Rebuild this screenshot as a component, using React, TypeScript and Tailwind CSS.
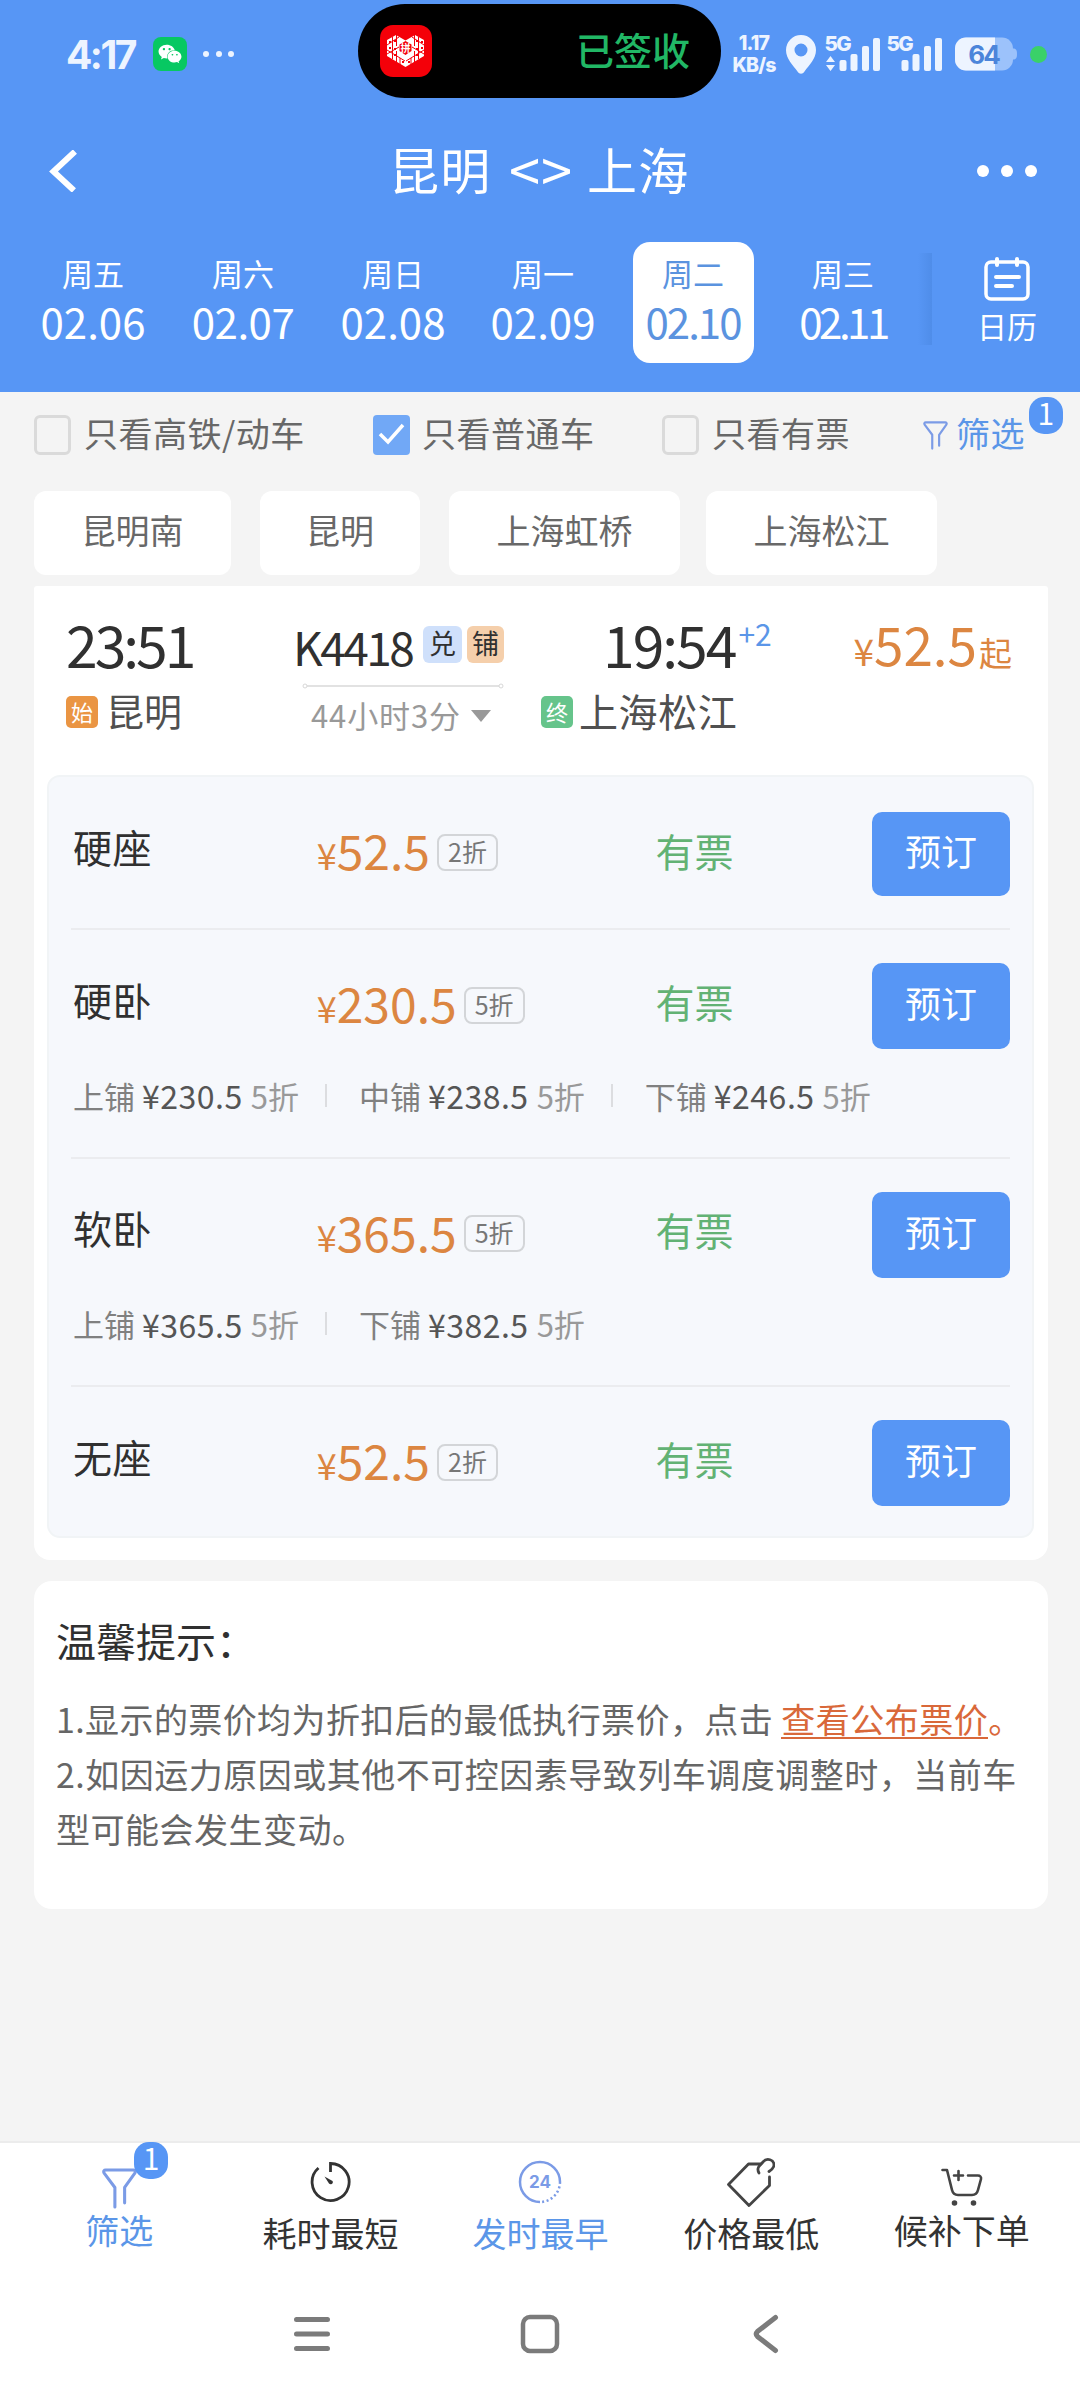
import { FaWeixin } from "react-icons/fa";
import clsx from "clsx";

const days = [
  { week: "周五", date: "02.06", spacing: "tracking-normal" },
  { week: "周六", date: "02.07", spacing: "tracking-[-0.5px]" },
  { week: "周日", date: "02.08", spacing: "tracking-normal" },
  { week: "周一", date: "02.09", spacing: "tracking-normal" },
  { week: "周二", date: "02.10", spacing: "tracking-[-2px]", active: true },
  { week: "周三", date: "02.11", spacing: "tracking-[-3.500px]" },
];

const stations = [
  { name: "昆明南", size: "w-[197px] mr-[29px]" },
  { name: "昆明", size: "w-[160px] mr-[29px]" },
  { name: "上海虹桥", size: "w-[231px] mr-[26px]" },
  { name: "上海松江", size: "w-[231px]" },
];

const seats = [
  { name: "硬座", price: "52.5", discount: "2折", berths: [] },
  {
    name: "硬卧",
    price: "230.5",
    discount: "5折",
    berths: [
      { name: "上铺", price: "¥230.5", discount: "5折" },
      { name: "中铺", price: "¥238.5", discount: "5折" },
      { name: "下铺", price: "¥246.5", discount: "5折" },
    ],
  },
  {
    name: "软卧",
    price: "365.5",
    discount: "5折",
    berths: [
      { name: "上铺", price: "¥365.5", discount: "5折" },
      { name: "下铺", price: "¥382.5", discount: "5折" },
    ],
  },
  { name: "无座", price: "52.5", discount: "2折", berths: [] },
];

function PddLogo() {
  return (
    <svg width="52" height="52" viewBox="0 0 52 52">
      <rect width="52" height="52" rx="13" fill="#f40009" />
      <path d="M16 10 7 15v16l18.500 11L44 31V15l-9-5-9.500 5.500z" fill="#fff" />
      <path
        d="M12.500 12v22M16.500 9v12M16.500 26v11M38.500 12v22M34.500 9v12M34.500 26v11M7 20l12-8M32 12l12 8M7 25l18 11M44 25 26 36M20 33v7M31 33v7M7 29l12-7M44 29l-12-7"
        stroke="#f40009"
        strokeWidth="1"
      />
      <path
        d="M9 17h2M9 23h2M14 16h2M14 24h2M36 16h2M36 24h2M41 17h2M41 23h2M14 30h2M36 30h2M22 37h2M28 37h2"
        stroke="#f40009"
        strokeWidth="2"
      />
      <path d="M25.500 16 31.500 19.500v6.500l-6 4-6-4v-6.500z" fill="#f40009" />
      <text x="25.500" y="26.500" fontSize="10" fontWeight="700" textAnchor="middle" fill="#fff">
        拼
      </text>
    </svg>
  );
}

function Signal({ arrows }: { arrows?: boolean }) {
  return (
    <svg className="overflow-visible" width="57" height="40" viewBox="0 0 57 40" fill="#edf4ff">
      <text x="-.5" y="17" fontSize="20.500" fontWeight="800" fontFamily="Inter" letterSpacing="-1.5">
        5G
      </text>
      {arrows && <path d="M5.500 22l4.500 6H1zM5.500 37l4.500-6H1z" />}
      <rect x="14.500" y="26" width="7" height="11" rx="2" />
      <rect x="25.500" y="20" width="7" height="17" rx="2" />
      <rect x="37" y="12" width="7" height="25" rx="2" />
      <rect x="48" y="4" width="7" height="33" rx="2" />
    </svg>
  );
}

function StatusBar() {
  return (
    <div className="flex h-[108px] items-center pl-[66px] text-[#edf4ff]">
      <span className="w-[87px] text-[39px] leading-none font-bold tracking-[-2.500px] font-['Inter']">4:17</span>
      <div className="grid h-[34px] w-[34px] place-content-center rounded-[8px] bg-[#07c862]">
        <FaWeixin className="text-[24px] text-white" />
      </div>
      <div className="ml-4 flex w-[31px] justify-between">
        <i className="size-[6px] rounded-full bg-[#edf4ff]" />
        <i className="size-[6px] rounded-full bg-[#edf4ff]" />
        <i className="size-[6px] rounded-full bg-[#edf4ff]" />
      </div>
      <div className="mt-1 ml-[124px] flex h-[94px] w-[363px] items-center justify-between self-start rounded-full bg-black pr-[31px] pl-[22px]">
        <PddLogo />
        <span className="pb-1 text-[38px] leading-none text-[#21b765] font-medium">已签收</span>
      </div>
      <div className="ml-[8px] w-[50px] text-center text-[19.500px] leading-[22px] font-extrabold tracking-[-0.8px] font-['Inter']">
        <p>1.17</p>
        <p>KB/s</p>
      </div>
      <svg className="ml-[7px]" width="30" height="39" viewBox="0 0 30 39">
        <path
          fillRule="evenodd"
          fill="#edf4ff"
          d="M15 0a15 15 0 0 1 15 15c0 9-7 15-11.500 21.500-2 3-5 3-7 0C7 30 0 24 0 15A15 15 0 0 1 15 0zm0 8.500a6.500 6.500 0 1 0 0 13 6.500 6.500 0 0 0 0-13z"
        />
      </svg>
      <div className="ml-[9px] flex gap-[5px]">
        <Signal arrows />
        <Signal />
      </div>
      <svg className="ml-[11px]" width="62" height="34" viewBox="0 0 62 34">
        <rect width="58" height="33" y=".5" rx="11" fill="#9cc2fb" />
        <path d="M58 11.500c3 0 4 1.500 4 5.500s-1 5.500-4 5.500z" fill="#9cc2fb" />
        <path d="M11 .5h29v33H11a11 11 0 0 1-11-11v-11A11 11 0 0 1 11 .5z" fill="#edf4ff" />
        <text x="28.500" y="26.500" fontSize="26" fontWeight="700" fontFamily="Inter" textAnchor="middle" letterSpacing="-2" fill="#4c85da">
          64
        </text>
      </svg>
      <i className="ml-[13px] size-[17px] rounded-full bg-[#3ad169]" />
    </div>
  );
}

function Header() {
  return (
    <header className="h-[392px] bg-[#5796f5] text-white">
      <StatusBar />
      <div className="flex h-[134px] items-center pr-[43px] pb-2 pl-[49px]">
        <svg width="39" height="42" viewBox="0 0 39 42" fill="none" stroke="#fff" strokeWidth="6">
          <path d="M26 1.500 4.500 21.500 25 40.500" />
        </svg>
        <h1 className="ml-[301px] flex w-[590px] pb-[7px] text-[50px] leading-none tracking-[1.500px]">
          <span className="w-[120px]">昆明</span>
          <span className="w-[78px] text-[56px] leading-[50px] tracking-[1px]">&lt;&gt;</span>
          <span>上海</span>
        </h1>
        <div className="flex gap-3">
          <i className="size-[12px] rounded-full bg-white" />
          <i className="size-[12px] rounded-full bg-white" />
          <i className="size-[12px] rounded-full bg-white" />
        </div>
      </div>
      <div className="flex pl-[18px]">
        {days.map((d) => (
          <div key={d.date} className="w-[150px]">
            <div
              className={clsx(
                "mx-auto h-[121px] w-[121px] rounded-[17px] pt-[15px] text-center",
                d.active && "bg-white text-[#5b93df]"
              )}
            >
              <p className="text-[31px] leading-none">{d.week}</p>
              <p className={clsx("mt-[12px] text-[42px] leading-none", d.spacing)}>{d.date}</p>
            </div>
          </div>
        ))}
        <div className="mt-[11px] h-[92px] w-[14px] bg-linear-to-r from-transparent to-[#4f8de9]" />
        <div className="flex flex-1 flex-col items-center pt-[15px] pl-[2px]">
          <svg width="46" height="44" viewBox="0 0 46 44" fill="none" stroke="#fff" strokeLinecap="round">
            <rect x="2" y="5" width="42" height="37" rx="5" strokeWidth="3.500" />
            <path d="M13 2v6M33 2v6M12 20h23M12 29h16" strokeWidth="4" />
          </svg>
          <p className="mt-[9px] text-[30px] leading-none">日历</p>
        </div>
      </div>
    </header>
  );
}

function Check({ on }: { on?: boolean }) {
  if (on) {
    return (
      <svg width="37" height="40" viewBox="0 0 37 40" fill="none">
        <rect width="37" height="40" rx="4" fill="#71a8f6" />
        <path d="M7 19l8 8 15-17" stroke="#fff" strokeWidth="3.500" />
      </svg>
    );
  }
  return <span className="h-[40px] w-[37px] rounded-[6px] border-[3px] border-[#dadada]" />;
}

function Funnel({ className }: { className?: string }) {
  return (
    <svg className={className} viewBox="0 0 34 40" fill="none" stroke="#7b9be6" strokeWidth="3" strokeLinecap="round" strokeLinejoin="round">
      <path d="M12.500 38V19L2 5c-1-2 0-3 1.500-3h27C32 2 33 3 32 5L22 19v15" />
    </svg>
  );
}

function Filters() {
  return (
    <>
      <div className="flex h-[99px] items-center pb-[13px] pl-[34px] text-[34px] leading-none tracking-[0.5px] text-[#686868]">
        <Check />
        <span className="ml-[13px] w-[289px] pb-1">只看高铁/动车</span>
        <Check on />
        <span className="ml-[12px] w-[240px] pb-1">只看普通车</span>
        <Check />
        <span className="ml-[13px] w-[211px] pb-1">只看有票</span>
        <Funnel className="h-[29px] w-[25px]" />
        <span className="ml-[8px] pb-1 text-[#5b96e8]">筛选</span>
        <span className="mb-[40px] ml-[4px] h-[37px] w-[34px] rounded-[15px] bg-[#5796f5] text-center text-[30px] leading-[31px] text-white">1</span>
      </div>
      <div className="flex px-[34px] text-[34px] text-[#686868]">
        {stations.map((s) => (
          <div key={s.name} className={clsx("h-[84px] rounded-[12px] bg-white text-center leading-[77px]", s.size)}>
            {s.name}
          </div>
        ))}
      </div>
    </>
  );
}

function TrainHead() {
  return (
    <div className="flex h-[189px] pt-[29px] text-[#303030] leading-none">
      <div className="w-[261px] pl-[32px]">
        <p className="text-[57px] tracking-[-3px]">23:51</p>
        <div className="mt-[19px] flex items-center">
          <span className="mt-[3px] h-[32px] w-[32px] rounded-[5px] bg-[#ea9543] text-center text-[22px] leading-[30px] text-white">始</span>
          <span className="ml-[8px] text-[38px] text-[#505050]">昆明</span>
        </div>
      </div>
      <div className="w-[246px]">
        <div className="flex items-center pt-[8px]">
          <span className="-ml-[2px] w-[129px] text-[46px] leading-[46px] tracking-[-2.500px]">K4418</span>
          <span className="mr-[5px] mb-[3px] ml-[1px] h-[37px] w-[39px] rounded-[6px] bg-[#cfe0fb] text-center text-[27px] leading-[34px]">兑</span>
          <span className="mb-[3px] h-[37px] w-[37px] rounded-[6px] bg-[#f5cfab] text-center text-[27px] leading-[34px]">铺</span>
        </div>
        <svg className="mt-[14px] ml-[7px]" width="202" height="6" viewBox="0 0 202 6" fill="none" stroke="#d8d8d8">
          <circle cx="3" cy="3" r="2" />
          <path d="M5 3h192" strokeWidth="1.500" />
          <circle cx="199" cy="3" r="2" />
        </svg>
        <div className="mt-[10px] ml-[16px] flex items-center text-[31px] tracking-[0.9px] text-[#999]">
          44小时3分
          <i className="mt-[3px] ml-[10px] border-x-[10px] border-t-[12px] border-x-transparent border-t-[#999]" />
        </div>
      </div>
      <div className="w-[280px]">
        <div className="flex pl-[62px]">
          <span className="text-[57px] tracking-[-2px]">19:54</span>
          <span className="mt-[3px] ml-[3px] text-[30px] text-[#5b96e8]">+2</span>
        </div>
        <div className="mt-[19px] flex items-center">
          <span className="mt-[3px] h-[32px] w-[32px] rounded-[5px] bg-[#66c48b] text-center text-[22px] leading-[30px] text-white">终</span>
          <span className="ml-[6px] text-[39px] tracking-[0.6px] text-[#505050]">上海松江</span>
        </div>
      </div>
      <div className="mt-[2px] flex flex-1 items-baseline justify-end pr-[36px] text-[#dc8641] whitespace-nowrap">
        <span className="text-[37px]">¥</span>
        <span className="mr-[2px] text-[53px]">52.5</span>
        <span className="text-[33px]">起</span>
      </div>
    </div>
  );
}

function SeatRow({ seat, first, last }: { seat: (typeof seats)[number]; first: boolean; last: boolean }) {
  const hasBerths = seat.berths.length > 0;
  return (
    <div className={clsx("mx-[22px]", !last && "border-b-2 border-[#ebecef]", first ? "h-[153px]" : hasBerths ? "h-[228.500px]" : "h-[152px]")}>
      <div className="flex h-[152px] items-center pl-[2px] leading-none">
        <span className="w-[244px] pb-[14px] text-[39px] tracking-[0.5px] text-[#303030]">{seat.name}</span>
        <div className="flex w-[339px] items-center">
          <div className="pb-[8px] text-[#dc8641]">
            <span className="text-[36px]">¥</span>
            <span className="text-[48px]">{seat.price}</span>
          </div>
          <span className="mb-[2px] ml-[7px] h-[37px] w-[61px] rounded-[8px] border-2 border-[#d3d5d8] text-center text-[25px] leading-[30px] text-[#777]">
            {seat.discount}
          </span>
        </div>
        <span className={clsx("w-[217px] text-[39px] text-[#62b274]", first ? "pb-[6px]" : "pb-[10px]")}>有票</span>
        <button className={clsx("w-[138px] rounded-[10px] bg-[#5796f5] pb-[8px] text-[36px] text-white", first ? "mt-[2px] h-[84px]" : "h-[86px]")}>
          预订
        </button>
      </div>
      {hasBerths && (
        <div className="-mt-[3px] flex items-center pl-[2px] text-[31px] leading-none text-[#808080]">
          {seat.berths.map((b, i) => (
            <div key={b.name} className="flex items-center">
              {i > 0 && <i className="mr-[32px] ml-[26px] h-[23px] w-[2px] bg-[#dcdde0]" />}
              <span>{b.name}</span>
              <span className="ml-[7px] text-[32px] tracking-[0.5px] text-[#555]">{b.price}</span>
              <span className="ml-[8px] text-[#999]">{b.discount}</span>
            </div>
          ))}
        </div>
      )}
    </div>
  );
}

function Tips() {
  return (
    <section className="mx-[34px] mt-[21px] w-[1014px] h-[328px] rounded-[18px] bg-white pt-[39px] pl-[22px] text-[#666]">
      <h2 className="text-[40px] leading-none text-[#303030]">温馨提示：</h2>
      <div className="mt-[31px] text-[34px] leading-[55px] tracking-[0.5px] whitespace-nowrap">
        <p>
          <span className="tracking-[0.4px]">1.显示的票价均为折扣后的最低执行票价，点击 </span>
          <span className="text-[#d9683a]">
            <a className="border-b-2 border-[#d9683a] leading-none inline-block pb-[1px]">查看公布票价</a>。
          </span>
        </p>
        <p>2.如因运力原因或其他不可控因素导致列车调度调整时，当前车</p>
        <p>型可能会发生变动。</p>
      </div>
    </section>
  );
}

function TabBar() {
  return (
    <nav className="flex h-[115px] border-t-2 border-[#ececec] bg-white px-[14px] text-[34px] leading-none text-[#333]">
      <div className="relative flex w-[210.400px] flex-col items-center pt-[25px] text-[#5b96e8]">
        <Funnel className="h-[41px] w-[35px]" />
        <span className="absolute -top-px left-[120px] h-[37px] w-[34px] rounded-[15px] bg-[#5796f5] text-center text-[30px] leading-[31px] text-white">1</span>
        <p className="mt-[4px]">筛选</p>
      </div>
      <div className="flex w-[210.400px] flex-col items-center pt-[18px] pl-[2px]">
        <svg width="42" height="42" viewBox="0 0 42 42" fill="none" stroke="#333" strokeWidth="2.800">
          <path d="M20.500 11V2.500A18.500 18.500 0 1 1 8.500 7" />
          <path d="M14.500 15.500l4.500 7c1.500 2 5 0 3.500-2.500z" fill="#333" stroke="none" />
        </svg>
        <p className="mt-[13px]">耗时最短</p>
      </div>
      <div className="flex w-[210.400px] flex-col items-center pt-[17px] pl-[1px] text-[#5b96e8]">
        <svg width="44" height="44" viewBox="0 0 44 44" fill="none" stroke="#7b9be6" strokeWidth="2.500">
          <path d="M22 42A20 20 0 1 1 42 22" />
          <path d="M42 22a20 20 0 0 1-20 20" strokeDasharray="2 2.500" />
          <text x="22" y="28" fontSize="17" fontWeight="700" fontFamily="Inter" textAnchor="middle" fill="#7b9be6" stroke="none">
            24
          </text>
        </svg>
        <p className="mt-[12px]">发时最早</p>
      </div>
      <div className="flex w-[210.400px] flex-col items-center pt-[14px] pl-[2px]">
        <svg width="48" height="50" viewBox="0 0 48 50" fill="none" stroke="#444" strokeWidth="2.800" strokeLinecap="round" strokeLinejoin="round">
          <path d="M34 7H21.500L1.500 27.500 22 48.500 42.500 28.500V20" />
          <path d="M32 16c-3-5 1-8 4-11 4-5 11-2 11 3 0 3-2 4.500-5 6.500" />
        </svg>
        <p className="mt-[9px]">价格最低</p>
      </div>
      <div className="flex w-[210.400px] flex-col items-center pt-[25px] pl-[2px]">
        <svg width="42" height="38" viewBox="0 0 42 38" fill="none" stroke="#444" strokeWidth="2.600" strokeLinecap="round" strokeLinejoin="round">
          <path d="M1.500 2H6l5 20c1 4 3 5 6 5h14c3 0 5-1 6-5l3-11c.5-2-1-3.500-3-3.500H27M17.500 3v9M13 7.500h9" />
          <circle cx="13.500" cy="35" r="1.500" fill="#444" />
          <circle cx="32.500" cy="35" r="1.500" fill="#444" />
        </svg>
        <p className="mt-[7px]">候补下单</p>
      </div>
    </nav>
  );
}

function SystemNav() {
  return (
    <div className="flex h-[144px] items-center justify-between bg-white pt-[12px] pl-[294px] pr-[301px]">
      <svg width="36" height="40" viewBox="0 0 36 40" stroke="#7b7b7b" strokeWidth="5" strokeLinecap="round">
        <path d="M2.500 5.500h31M2.500 20h31M2.500 34.500h31" />
      </svg>
      <svg className="mr-[4px]" width="40" height="40" viewBox="0 0 40 40" fill="none" stroke="#7b7b7b" strokeWidth="4.500">
        <rect x="3" y="3" width="34" height="34" rx="7" />
      </svg>
      <svg width="26" height="40" viewBox="0 0 26 40" fill="none" stroke="#7b7b7b" strokeWidth="5" strokeLinecap="round">
        <path d="M22.500 3.500 4.500 17.500q-2.500 2.500 0 5L22.500 36.500" />
      </svg>
    </div>
  );
}

export default function App() {
  return (
    <div className="flex h-[2400px] w-[1080px] flex-col overflow-hidden bg-[#f4f4f4] font-['Noto_Sans_CJK_SC',sans-serif]">
      <Header />
      <Filters />
      <section className="mr-[32px] ml-[34px] mt-[11px] h-[974px] rounded-t-[3px] rounded-b-[16px] bg-white">
        <TrainHead />
        <div className="mr-[14px] ml-[13px] h-[763px] rounded-[13px] border-2 border-[#f1f4f6] bg-[#f6f8fc]">
          {seats.map((s, i) => (
            <SeatRow key={s.name} seat={s} first={i === 0} last={i === seats.length - 1} />
          ))}
        </div>
      </section>
      <Tips />
      <div className="mt-auto">
        <TabBar />
        <SystemNav />
      </div>
    </div>
  );
}
